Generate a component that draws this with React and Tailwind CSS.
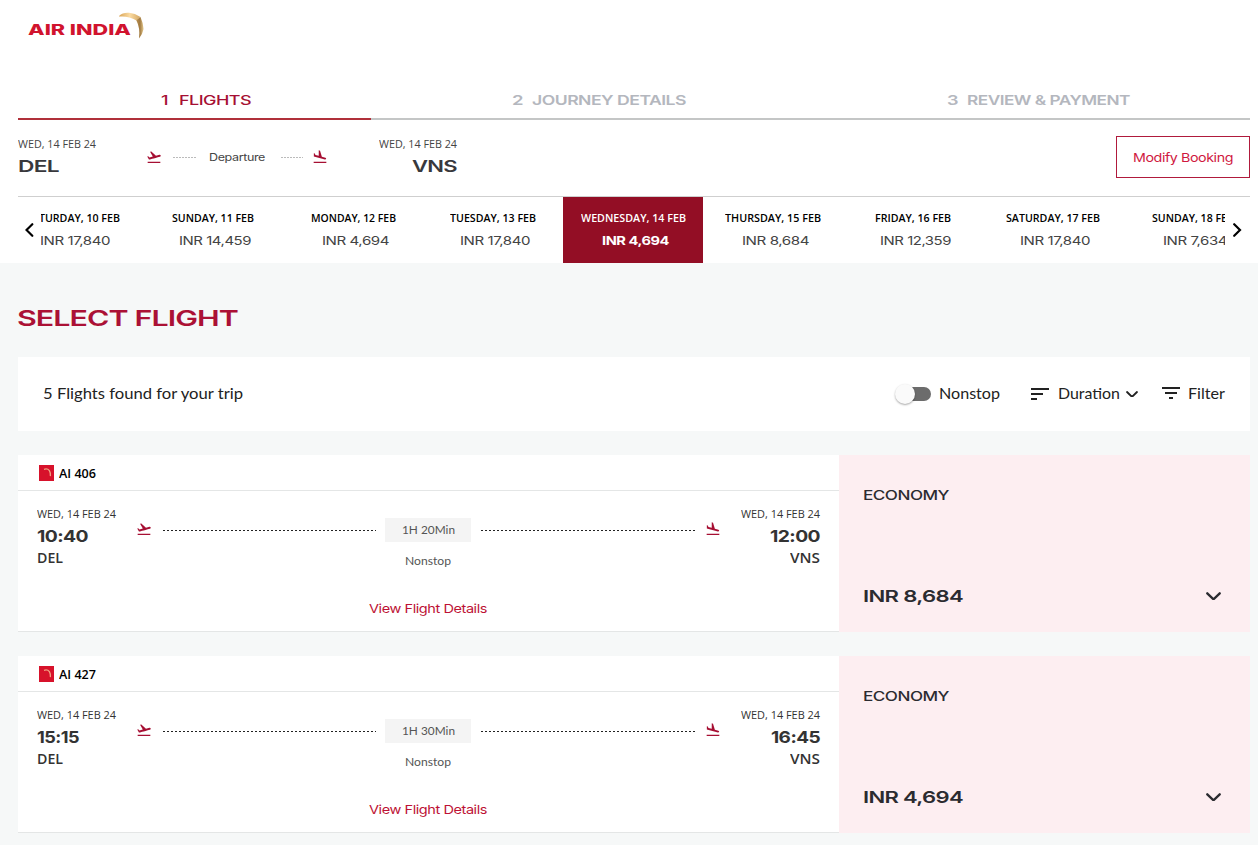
import React, { useLayoutEffect, useRef } from "react";
import { MdFlightTakeoff, MdFlightLand, MdSort, MdFilterList } from "react-icons/md";

const WIDE = "font-['Inter',sans-serif] tracking-[-0.03em]";
const SANS = "font-['Open_Sans',sans-serif]";

// Stretches a single line of text horizontally to the given width.
function Fit({ w, className = "", children }) {
  const ref = useRef(null);
  useLayoutEffect(() => {
    const el = ref.current;
    el.style.transform = "none";
    const natural = el.getBoundingClientRect().width;
    el.style.transform = `scaleX(${w / natural})`;
  }, [w, children]);
  return (
    <span className={`block shrink-0 whitespace-nowrap ${className}`} style={{ width: w }}>
      <span ref={ref} className="inline-block origin-left align-top">
        {children}
      </span>
    </span>
  );
}

function Chevron({ dir, className }) {
  const d = { down: "M1.2 1.2 L7 6.8 L12.8 1.2", left: "M7.3 1.2 L1.5 7 L7.3 12.8", right: "M1.2 1.2 L7 7 L1.2 12.8" }[dir];
  return (
    <svg viewBox={dir === "down" ? "0 0 14 8" : "0 0 8.5 14"} className={className} fill="none" stroke="currentColor" strokeWidth="2.2" strokeLinecap="round" strokeLinejoin="miter">
      <path d={d} />
    </svg>
  );
}

function Logo() {
  return (
    <div className="flex pl-7">
      <Fit w={103} className="mt-[20px] h-[19px] font-['Inter',sans-serif] text-[15px] leading-[20px] font-extrabold text-[#d1132e]">
        AIR INDIA
      </Fit>
      <svg viewBox="0 0 26 28" className="-ml-3 mt-[12px] h-7 w-[26px]">
        <defs>
          <linearGradient id="goldTop" x1="0" x2="1">
            <stop offset="0" stopColor="#d9a557" />
            <stop offset="0.5" stopColor="#fbdba2" />
            <stop offset="1" stopColor="#d3a660" />
          </linearGradient>
          <linearGradient id="goldSide" x1="0" x2="1">
            <stop offset="0" stopColor="#b98f50" />
            <stop offset="0.5" stopColor="#a17a40" />
            <stop offset="1" stopColor="#e6cb91" />
          </linearGradient>
        </defs>
        <path d="M0 4 Q4 0.2 10 0.8 Q16 1.4 21.5 5 L17.5 8.4 Q9 3.6 0 4.6Z" fill="url(#goldTop)" />
        <path d="M21.5 5 Q24.2 11 24.6 17 Q23.5 22.5 20 26.5 Q21.4 16 17.3 8.2Z" fill="url(#goldSide)" />
      </svg>
    </div>
  );
}

function Step({ n, label, nw, lw, gap, className }) {
  return (
    <div className={`flex h-[39px] border-b-2 ${WIDE} text-[13px] leading-[21px] ${gap} ${className}`}>
      <Fit w={nw} className="mt-[9px] h-5">{n}</Fit>
      <Fit w={lw} className="mt-[9px] h-5">{label}</Fit>
    </div>
  );
}

const dates = [
  ["SATURDAY, 10 FEB", 94, "INR 17,840", 70],
  ["SUNDAY, 11 FEB", 82, "INR 14,459", 72],
  ["MONDAY, 12 FEB", 85, "INR 4,694", 67],
  ["TUESDAY, 13 FEB", 86, "INR 17,840", 70],
  ["WEDNESDAY, 14 FEB", 105, "INR 4,694", 67],
  ["THURSDAY, 15 FEB", 96, "INR 8,684", 67],
  ["FRIDAY, 16 FEB", 76, "INR 12,359", 71],
  ["SATURDAY, 17 FEB", 94, "INR 17,840", 70],
  ["SUNDAY, 18 FEB", 82, "INR 7,634", 64],
];

function DateStrip() {
  return (
    <div className="mr-2 ml-[18px] flex border-t border-[#cfcfcf]">
      <div className="flex w-[23px] shrink-0 items-center pl-[7px]">
        <Chevron dir="left" className="h-[14px] w-[8.5px] text-black" />
      </div>
      <div className="w-[1184px] shrink-0 overflow-hidden">
        <div className="-ml-[38px] flex w-[1260px]">
          {dates.map(([day, dw, fare, fw], i) => (
            <div key={i} className={`flex h-[66px] w-[140px] flex-col items-center pt-[13px] ${i === 4 ? "bg-[#930e25] text-white" : "text-black"}`}>
              <Fit w={dw} className={`${SANS} h-4 text-[10.5px] leading-[17px] font-semibold`}>{day}</Fit>
              <Fit w={fw} className={`${WIDE} mt-[7px] ml-1 h-4 text-[12px] leading-4 ${i === 4 ? "font-bold" : "font-normal text-[#444]"}`}>{fare}</Fit>
            </div>
          ))}
        </div>
      </div>
      <div className="flex grow items-center pl-[8px]">
        <Chevron dir="right" className="h-[14px] w-[8.5px] text-black" />
      </div>
    </div>
  );
}

function AirlineMark() {
  return (
    <svg viewBox="0 0 15 16" className="h-4 w-[15px]">
      <rect width="15" height="16" fill="#d7122b" />
      <path d="M5 4.3 Q8.5 3.2 10.4 5.6 Q11.8 8 11.4 11.2" fill="none" stroke="#f0a080" strokeWidth="1.3" />
    </svg>
  );
}

function Endpoint({ time, tw, code, cw, right }) {
  return (
    <div className={`flex w-[79px] flex-col pt-[15px] text-[#333] ${right ? "items-end" : "items-start"}`}>
      <Fit w={79} className={`${SANS} h-4 text-[10.5px] leading-[17px] font-medium`}>WED, 14 FEB 24</Fit>
      <Fit w={tw} className={`${WIDE} mt-[4px] h-5 text-[16.5px] leading-5 font-bold`}>{time}</Fit>
      <Fit w={cw} className={`${SANS} mt-[2px] h-5 text-[13.5px] leading-5 font-semibold`}>{code}</Fit>
    </div>
  );
}

const dots = "h-px bg-[repeating-linear-gradient(90deg,#222_0_2px,transparent_2px_4px)]";

function FlightCard({ no, dep, depW, arr, arrW, dur, fare }) {
  return (
    <div className="mt-6 flex h-[177px]">
      <div className="w-[821px] border-b border-[#e4e6e6] bg-white">
        <div className="flex h-9 items-center gap-[5px] border-b border-[#e4e6e6] pl-[21px]">
          <AirlineMark />
          <Fit w={37} className={`${SANS} h-5 text-[12px] leading-[21px] font-semibold text-black`}>{no}</Fit>
        </div>
        <div className="flex pl-[19px]">
          <Endpoint time={dep} tw={depW} code="DEL" cw={26} />
          <MdFlightTakeoff className="mt-[30px] ml-5 size-4 text-[#a60f33]" />
          <div className={`${dots} mt-[39px] ml-[11px] w-[213px]`} />
          <div className="ml-[9px] flex w-[86px] flex-col items-center pt-[27px] text-[12px] leading-6 text-[#555]">
            <div className="flex h-6 w-full justify-center bg-[#f4f4f4]">
              <Fit w={53}>{dur}</Fit>
            </div>
            <Fit w={46} className="mt-[7px]">Nonstop</Fit>
          </div>
          <div className={`${dots} mt-[39px] ml-[10px] w-[214px]`} />
          <MdFlightLand className="mt-[30px] mr-5 ml-[10px] size-4 text-[#a60f33]" />
          <Endpoint time={arr} tw={arrW} code="VNS" cw={30} right />
        </div>
        <div className="mt-[25px] flex">
          <Fit w={118} className={`${WIDE} ml-[351px] h-5 text-[12px] leading-[21px] text-[#bd1235]`}>View Flight Details</Fit>
        </div>
      </div>
      <div className="w-[411px] bg-[#fdeef1] pr-[29px] pl-6 text-[#2b2b30]">
        <Fit w={86} className={`${WIDE} mt-[30px] h-5 text-[13px] leading-[21px] font-medium`}>ECONOMY</Fit>
        <div className="mt-[79px] flex h-6 items-center justify-between">
          <Fit w={100} className={`${WIDE} h-6 text-[16.5px] leading-6 font-semibold`}>{fare}</Fit>
          <Chevron dir="down" className="h-[8.6px] w-[15px]" />
        </div>
      </div>
    </div>
  );
}

export default function App() {
  return (
    <div className="h-[845px] w-[1258px] overflow-hidden bg-[#f6f8f8] font-['Lato',sans-serif]">
      <div className="h-[263px] bg-white">
        <div className="h-[81px]">
          <Logo />
        </div>
        <div className="mr-2 ml-[18px] flex">
          <Step n="1" label="FLIGHTS" nw={7} lw={72} gap="gap-[11px] pl-[143px]" className="w-[353px] border-[#b0303a] font-medium text-[#a60f33]" />
          <Step n="2" label="JOURNEY DETAILS" nw={11} lw={154} gap="gap-[9px] pl-[141px]" className="w-[435px] border-[#c4c6c6] font-semibold text-[#b4b7be]" />
          <Step n="3" label="REVIEW & PAYMENT" nw={11} lw={163} gap="gap-[9px] pl-[141px]" className="w-[444px] border-[#c4c6c6] font-semibold text-[#b4b7be]" />
        </div>
        <div className="mr-2 ml-[18px] flex h-[76px]">
          <div className="w-[79px] pt-4">
            <Fit w={78} className={`${SANS} h-4 text-[10.5px] leading-[17px] text-[#444]`}>WED, 14 FEB 24</Fit>
            <Fit w={41} className={`${WIDE} mt-1 h-5 text-[16.5px] leading-5 font-semibold text-[#38383c]`}>DEL</Fit>
          </div>
          <MdFlightTakeoff className="mt-[29px] ml-[49px] size-4 text-[#a60f33]" />
          <div className="mt-[37px] ml-[11px] h-px w-[23px] bg-[repeating-linear-gradient(90deg,#bbb_0_2px,transparent_2px_3px)]" />
          <Fit w={56} className={`${WIDE} mt-[29px] ml-[13px] h-4 text-[10.5px] leading-[17px] text-[#444]`}>Departure</Fit>
          <div className="mt-[37px] ml-4 h-px w-[22px] bg-[repeating-linear-gradient(90deg,#bbb_0_2px,transparent_2px_3px)]" />
          <MdFlightLand className="mt-[29px] ml-[9px] size-4 text-[#a60f33]" />
          <div className="ml-[50px] flex w-[79px] flex-col items-end pt-4">
            <Fit w={78} className={`${SANS} h-4 text-[10.5px] leading-[17px] text-[#444]`}>WED, 14 FEB 24</Fit>
            <Fit w={45} className={`${WIDE} mt-1 h-5 text-[16.5px] leading-5 font-semibold text-[#38383c]`}>VNS</Fit>
          </div>
          <button className="mt-4 ml-auto flex h-[42px] w-[134px] items-center border border-[#b01a3c] pl-4">
            <Fit w={100} className={`${WIDE} h-5 text-left text-[12px] leading-[21px] text-[#d0193f]`}>Modify Booking</Fit>
          </button>
        </div>
        <DateStrip />
      </div>
      <div className="pr-2 pl-[18px]">
        <div className="-ml-px pt-10">
          <Fit w={221} className={`${WIDE} h-[30px] text-[21.5px] leading-[30px] font-semibold text-[#ab1135]`}>SELECT FLIGHT</Fit>
        </div>
        <div className="mt-6 flex h-[74px] items-center bg-white pr-[25px] pl-[25px] text-[16px] leading-6 text-[#222]">
          <Fit w={200} className="mr-auto mb-0.5">5 Flights found for your trip</Fit>
          <div className="mr-[8px] flex h-5 w-[36px] items-center">
            <div className="relative size-5 shrink-0 rounded-full bg-[#fafafa] shadow-[0_1px_2px_rgba(0,0,0,0.35)]" />
            <div className="-ml-[4px] h-[14px] w-5 rounded-r-full bg-[#6c6c6c]" />
          </div>
          <Fit w={61} className="mb-0.5">Nonstop</Fit>
          <MdSort className="ml-7 size-6" />
          <Fit w={62} className="mb-0.5 ml-[6px]">Duration</Fit>
          <Chevron dir="down" className="ml-[6px] h-[6.9px] w-3" />
          <MdFilterList className="mb-[3px] ml-[21px] size-6" />
          <Fit w={37} className="mb-0.5 ml-[5px]">Filter</Fit>
        </div>
        <FlightCard no="AI 406" dep="10:40" depW={51} arr="12:00" arrW={50} dur="1H 20Min" fare="INR 8,684" />
        <FlightCard no="AI 427" dep="15:15" depW={42} arr="16:45" arrW={49} dur="1H 30Min" fare="INR 4,694" />
      </div>
    </div>
  );
}
